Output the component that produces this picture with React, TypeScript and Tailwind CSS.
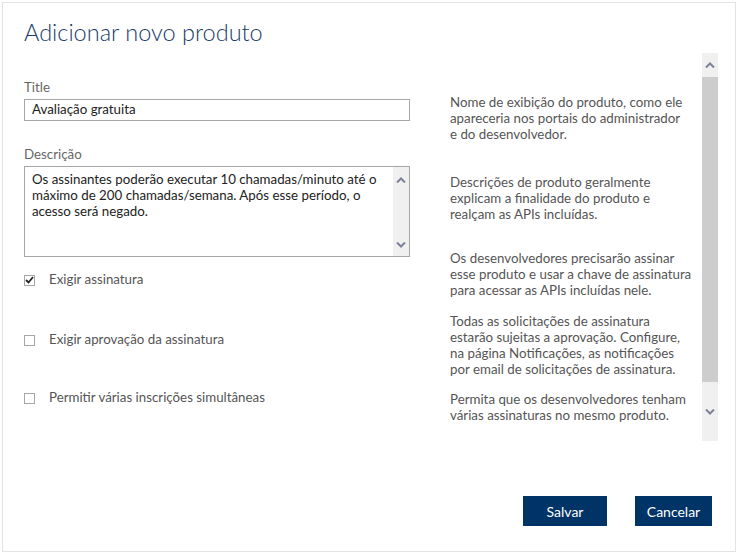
import React from 'react'

const font = { fontFamily: 'Lato, "Open Sans", sans-serif' }

function ChevronUp() {
  return (
    <svg width="10" height="6" viewBox="0 0 10 6" className="block">
      <path d="M1 5.5 L5 1.5 L9 5.5" fill="none" stroke="#7d8296" strokeWidth="2" />
    </svg>
  )
}

function ChevronDown() {
  return (
    <svg width="10" height="6" viewBox="0 0 10 6" className="block">
      <path d="M1 0.5 L5 4.5 L9 0.5" fill="none" stroke="#7d8296" strokeWidth="2" />
    </svg>
  )
}

function Checkbox({ checked, label }: { checked?: boolean; label: string }) {
  return (
    <div className="flex items-center h-[18px]">
      <div className="w-[11px] h-[11px] border border-[#a6a6a6] bg-white flex items-center justify-center">
        {checked && (
          <svg width="9" height="8" viewBox="0 0 9 8" className="block">
            <path d="M1 4 L3.5 6.5 L8 1" fill="none" stroke="#222" strokeWidth="1.8" />
          </svg>
        )}
      </div>
      <span className="ml-[14px] text-[13.3px] text-[#555]">{label}</span>
    </div>
  )
}

function Help({ lines, className }: { lines: string[]; className?: string }) {
  return (
    <div className={className}>
      {lines.map((l) => (
        <div key={l} className="whitespace-nowrap leading-[16px]">{l}</div>
      ))}
    </div>
  )
}

export default function App() {
  return (
    <div className="w-[737px] h-[553px] bg-white pt-[2px] pl-[2px]" style={font}>
      <div className="w-[734px] h-[550px] border border-[#e3e3e3] flex flex-col">
        {/* Header */}
        <div className="h-[50px] pl-[21px] pt-[14px]">
          <h1 className="text-[23.5px] font-light text-[#1a3c68] leading-[30px]">Adicionar novo produto</h1>
        </div>

        {/* Body */}
        <div className="h-[388px] flex pl-[21px]">
          {/* Left column */}
          <div className="w-[386px] pt-[25px]">
            <div className="text-[13.3px] text-[#666] leading-[18px]">Title</div>
            <div className="mt-[3px] h-[22px] border border-[#a6a6a6] px-[7px] flex items-center text-[13.3px] text-[#222]">
              Avaliação gratuita
            </div>

            <div className="mt-[24px] text-[13.3px] text-[#666] leading-[18px]">Descrição</div>
            <div className="mt-[3px] h-[91px] border border-[#a6a6a6] flex">
              <div className="flex-1 pl-[7px] pt-[4px] text-[13.3px] text-[#222] leading-[16px]">
                <div className="whitespace-nowrap">Os assinantes poderão executar 10 chamadas/minuto até o</div>
                <div className="whitespace-nowrap">máximo de 200 chamadas/semana. Após esse período, o</div>
                <div className="whitespace-nowrap">acesso será negado.</div>
              </div>
              <div className="w-[16px] bg-[#f0f0f0] flex flex-col items-center justify-between pt-[10px] pb-[8px]">
                <ChevronUp />
                <ChevronDown />
              </div>
            </div>

            <div className="mt-[14px]">
              <Checkbox checked label="Exigir assinatura" />
            </div>
            <div className="mt-[42px]">
              <Checkbox label="Exigir aprovação da assinatura" />
            </div>
            <div className="mt-[40px]">
              <Checkbox label="Permitir várias inscrições simultâneas" />
            </div>
          </div>

          {/* Right column */}
          <div className="w-[252px] ml-[40px] pt-[41px] text-[13.3px] text-[#555]">
            <Help lines={['Nome de exibição do produto, como ele', 'apareceria nos portais do administrador', 'e do desenvolvedor.']} />
            <Help className="mt-[32px]" lines={['Descrições de produto geralmente', 'explicam a finalidade do produto e', 'realçam as APIs incluídas.']} />
            <Help className="mt-[28px]" lines={['Os desenvolvedores precisarão assinar', 'esse produto e usar a chave de assinatura', 'para acessar as APIs incluídas nele.']} />
            <Help className="mt-[15px]" lines={['Todas as solicitações de assinatura', 'estarão sujeitas a aprovação. Configure,', 'na página Notificações, as notificações', 'por email de solicitações de assinatura.']} />
            <Help className="mt-[14px]" lines={['Permita que os desenvolvedores tenham', 'várias assinaturas no mesmo produto.']} />
          </div>

          {/* Scrollbar */}
          <div className="w-[16px] h-[388px] bg-[#f0f0f0] flex flex-col items-center">
            <div className="h-[24px] flex items-center justify-center">
              <ChevronUp />
            </div>
            <div className="w-full h-[305px] bg-[#cdcdcd]" />
            <div className="flex-1 flex items-center justify-center">
              <ChevronDown />
            </div>
          </div>
        </div>

        {/* Footer */}
        <div className="flex justify-end gap-[28px] pt-[55px] pr-[23px]">
          <button className="w-[84px] h-[30px] bg-[#003366] text-white text-[14px]">Salvar</button>
          <button className="w-[77px] h-[30px] bg-[#003366] text-white text-[14px]">Cancelar</button>
        </div>
      </div>
    </div>
  )
}
